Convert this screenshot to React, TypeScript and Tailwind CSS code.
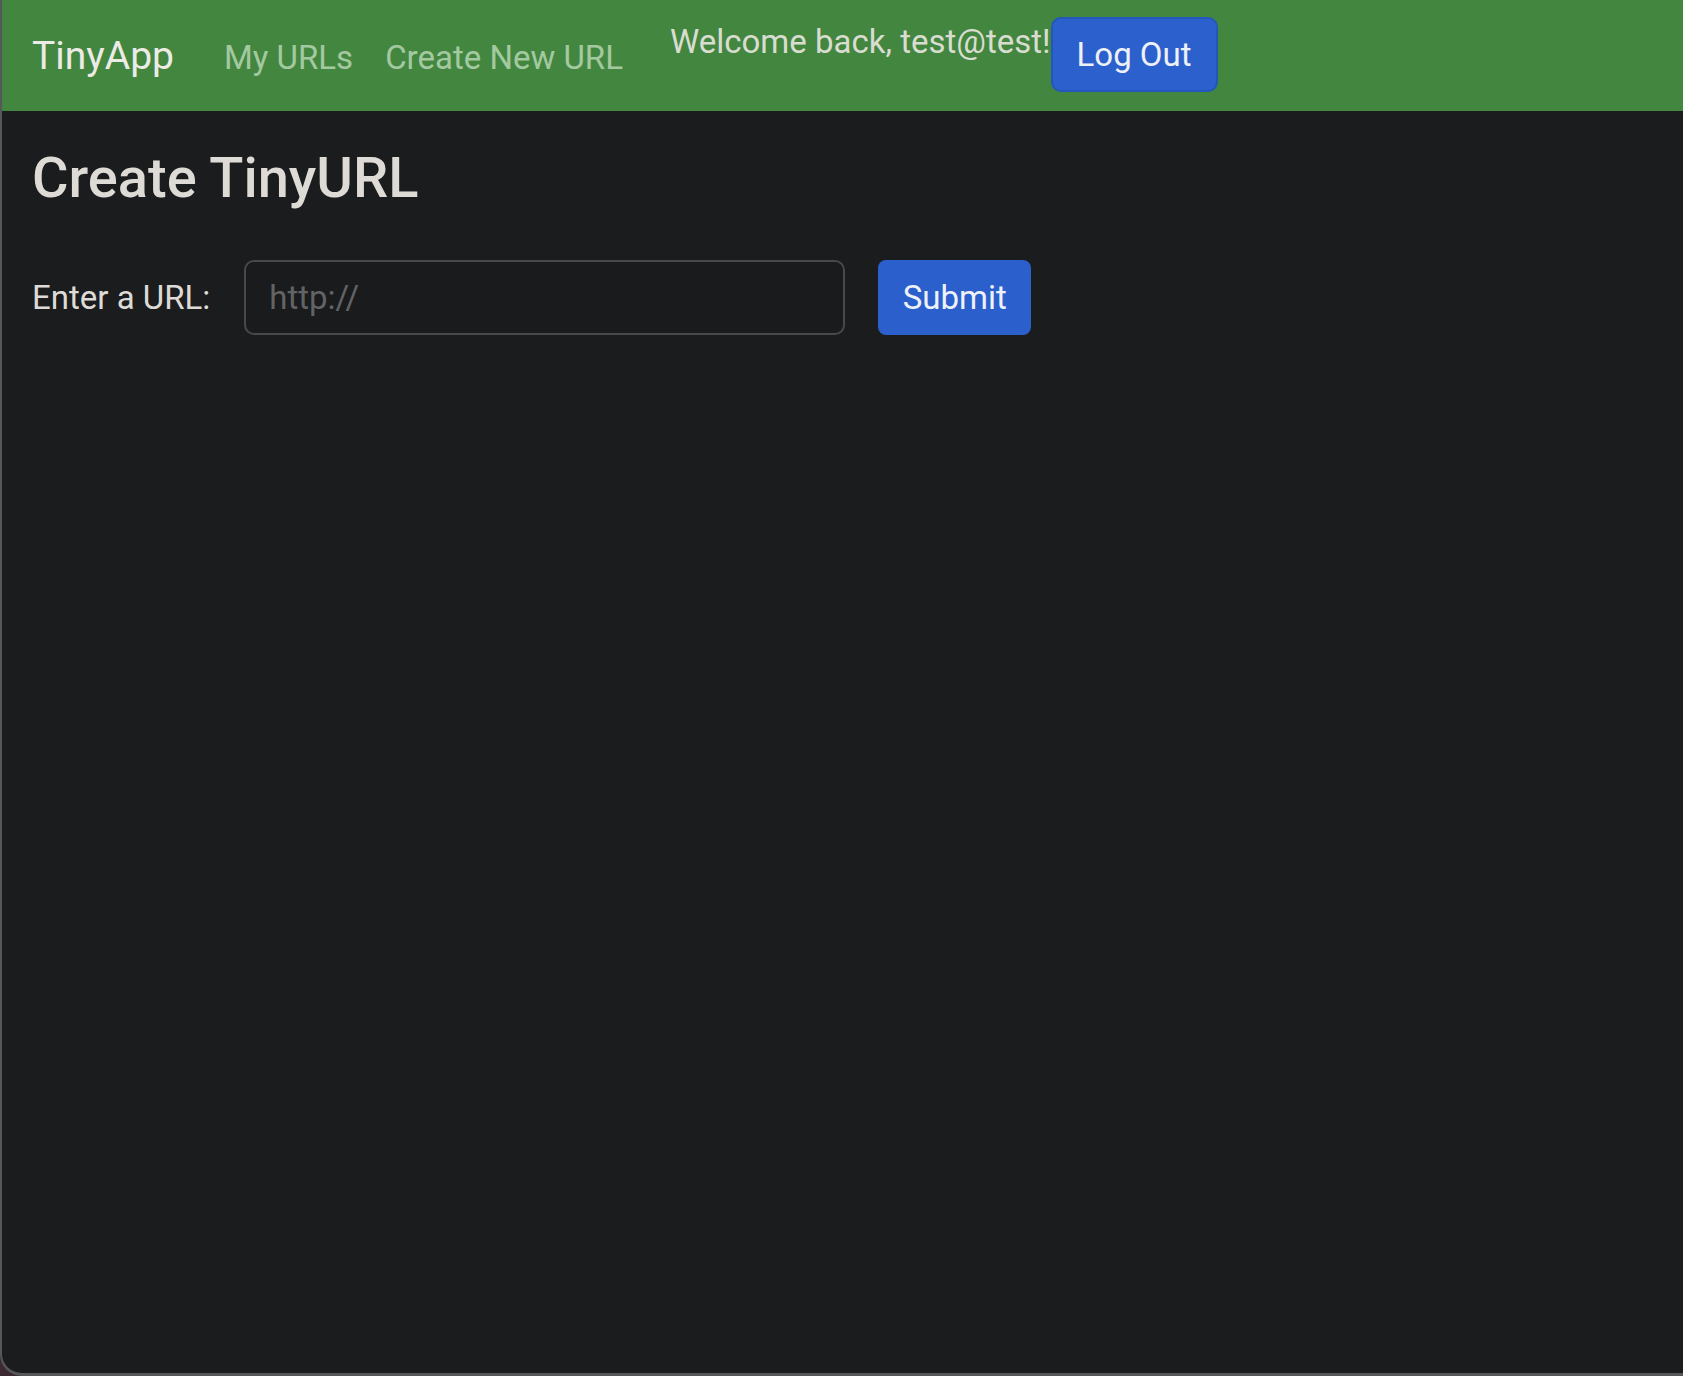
export default function App() {
  return (
    <div className="h-[1376px] w-[1683px] overflow-hidden bg-[#3a2a30]">
      <div
        className="flex h-full flex-col overflow-hidden rounded-bl-[22px] border-b-[3px] border-l-2 border-[#56575a] bg-[#1b1c1e]"
        style={{ fontFamily: 'Roboto, "Liberation Sans", sans-serif' }}
      >
        {/* Navbar */}
        <nav className="flex h-[111px] shrink-0 items-center bg-[#438640] pl-[30px]">
          <a className="mr-[34px] pt-[2px] text-[39px] leading-none text-[#ecebe6]">TinyApp</a>
          <a className="px-[16px] pt-[4px] text-[33px] leading-none text-[#a3c9a0]">My URLs</a>
          <a className="px-[16px] pt-[4px] text-[33px] leading-none text-[#a3c9a0]">Create New URL</a>
          <div className="ml-[31px] mt-[17px] flex items-start self-start">
            <span className="mt-[1px] text-[33px] leading-[48px] text-[#d9ddd0]">Welcome back, test@test!</span>
            <button className="h-[75px] rounded-[10px] border-2 border-[#2457bb] bg-[#2c60cc] px-[24px] text-[33px] text-[#eef1f8]">
              Log Out
            </button>
          </div>
        </nav>

        {/* Main */}
        <main className="px-[30px] pt-[34px]">
          <h2 className="text-[56px] font-medium leading-[1.2] text-[#dedbd6]">Create TinyURL</h2>
          <form className="mt-[48px] flex items-center">
            <label className="text-[33px] text-[#dedbd6]">Enter a URL:</label>
            <input
              type="text"
              placeholder="http://"
              className="ml-[34px] h-[75px] w-[601px] rounded-[10px] border-2 border-[#48494c] bg-[#1a1b1d] px-[23px] text-[33px] text-[#dedbd6] placeholder:text-[#626365] focus:outline-none"
            />
            <button
              type="button"
              className="ml-[33px] h-[75px] w-[153px] rounded-[8px] bg-[#2b5fcc] text-[33px] text-[#eef1f8]"
            >
              Submit
            </button>
          </form>
        </main>
      </div>
    </div>
  )
}
